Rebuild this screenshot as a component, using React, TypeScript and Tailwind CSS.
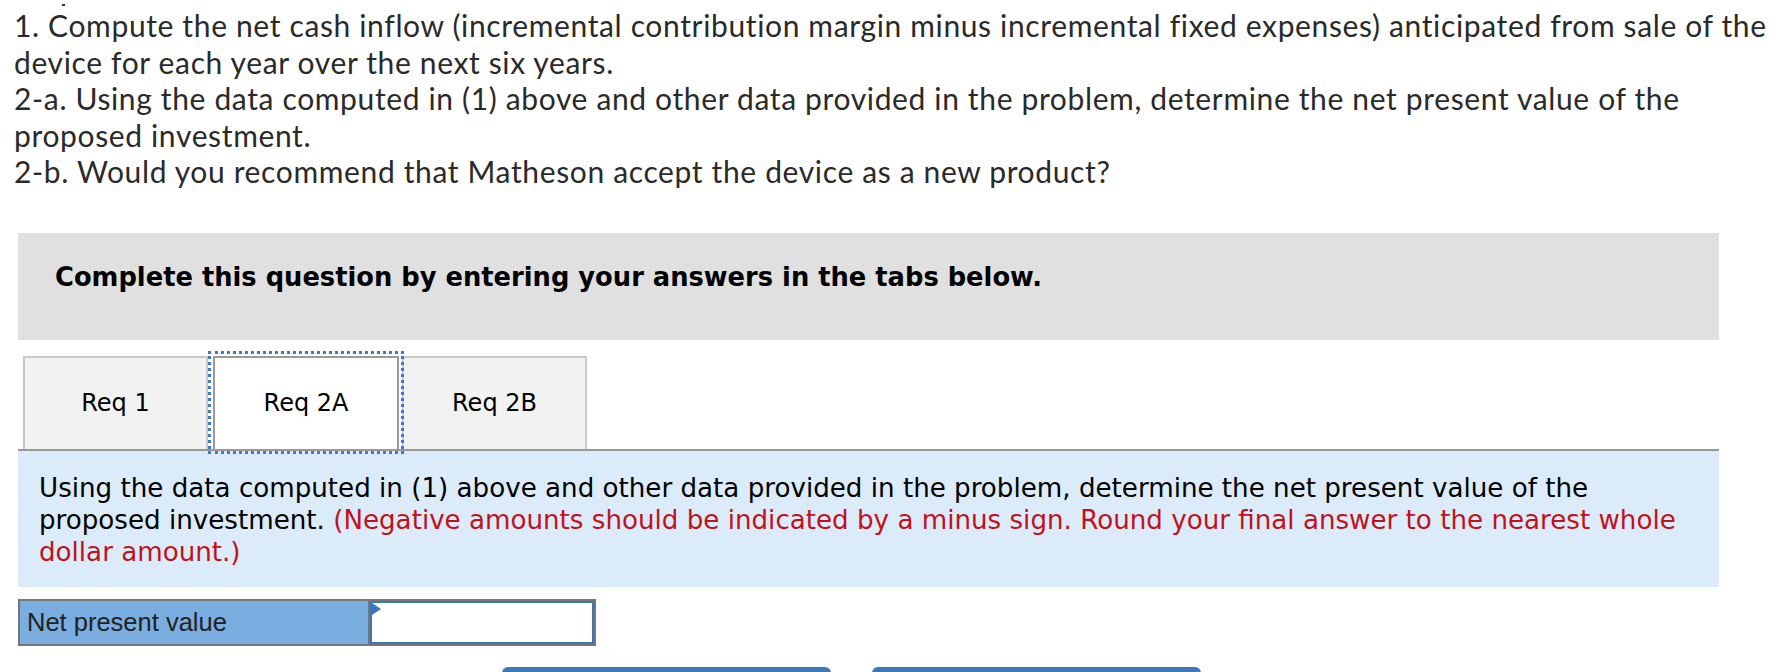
const questionFont = { fontFamily: 'Lato, "Open Sans", sans-serif' }
const verdana = { fontFamily: '"DejaVu Sans", Verdana, sans-serif' }
const arial = { fontFamily: '"Liberation Sans", Arial, sans-serif' }

const tabs = [
  { label: 'Req 1', active: false },
  { label: 'Req 2A', active: true },
  { label: 'Req 2B', active: false },
]

export default function App() {
  return (
    <div className="relative min-h-screen w-[1790px] overflow-hidden bg-white text-[#2a2a2a]">
      {/* stray mark above the first line */}
      <div className="absolute left-[62px] top-[4px] h-[2px] w-[3px] bg-[#333]" />

      <div
        className="whitespace-nowrap pl-[14px] pt-[7px] text-[30px] leading-[36.5px] tracking-[0.64px]"
        style={questionFont}
      >
        <p>
          1. Compute the net cash inflow (incremental contribution margin minus incremental fixed
          expenses) anticipated from sale of the
          <br />
          device for each year over the next six years.
        </p>
        <p>
          2-a. Using the data computed in (1) above and other data provided in the problem, determine
          the net present value of the
          <br />
          proposed investment.
        </p>
        <p>2-b. Would you recommend that Matheson accept the device as a new product?</p>
      </div>

      <div className="ml-[18px] mt-[43px] w-[1701px]" style={verdana}>
        <div className="h-[107px] bg-[#e0e0e0] pl-[37px] pt-[29px]">
          <h2 className="text-[25.75px] font-bold leading-[30px] text-black">
            Complete this question by entering your answers in the tabs below.
          </h2>
        </div>

        <div className="mt-[16px] flex border-b-2 border-[#999] pl-[5px]">
          {tabs.map((t, i) => (
            <div
              key={t.label}
              className={
                t.active
                  ? 'relative z-10 ml-[5px] flex h-[93px] w-[186px] items-center justify-center border-2 border-b-0 border-[#999] bg-white text-[24px] text-black outline-[3px] outline-offset-2 outline-dotted outline-[#3d7ac7]'
                  : i === 0
                    ? 'flex h-[93px] w-[185px] items-center justify-center border-2 border-b-0 border-[#c8c8c8] bg-[#f2f2f2] text-[24px] text-black'
                    : 'ml-[3px] flex h-[93px] w-[185px] items-center justify-center border-2 border-b-0 border-[#c8c8c8] bg-[#f2f2f2] text-[24px] text-black'
              }
            >
              {t.label}
            </div>
          ))}
        </div>

        <div className="h-[136px] whitespace-nowrap bg-[#dbebf9] pl-[21px] pt-[21px] text-[26.15px] leading-[32px] text-black">
          Using the data computed in (1) above and other data provided in the problem, determine the
          net present value of the
          <br />
          proposed investment.{' '}
          <span className="text-[#c0121c]">
            (Negative amounts should be indicated by a minus sign. Round your final answer to the
            nearest whole
            <br />
            dollar amount.)
          </span>
        </div>
      </div>

      <div className="ml-[18px] mt-[12px] flex h-[47px] w-[578px] border-2 border-[#777]">
        <div
          className="flex w-[348px] items-center bg-[#7aade0] pl-[7px] text-[25.5px] text-[#222]"
          style={arial}
        >
          Net present value
        </div>
        <div className="relative flex-1 border-l-2 border-[#777]">
          <input
            type="text"
            className="h-full w-full border-2 border-[#3a77bd] bg-white px-2 text-[22px] outline-none"
            style={arial}
          />
          <div className="absolute left-[2px] top-[2px] h-0 w-0 border-y-[6px] border-l-[9px] border-y-transparent border-l-[#3a77bd]" />
        </div>
      </div>

      <div className="ml-[502px] mt-[21px] flex gap-[41px]">
        <button className="h-[40px] w-[329px] rounded-t-md bg-[#3d78b7]" />
        <button className="h-[40px] w-[329px] rounded-t-md bg-[#3d78b7]" />
      </div>
    </div>
  )
}
